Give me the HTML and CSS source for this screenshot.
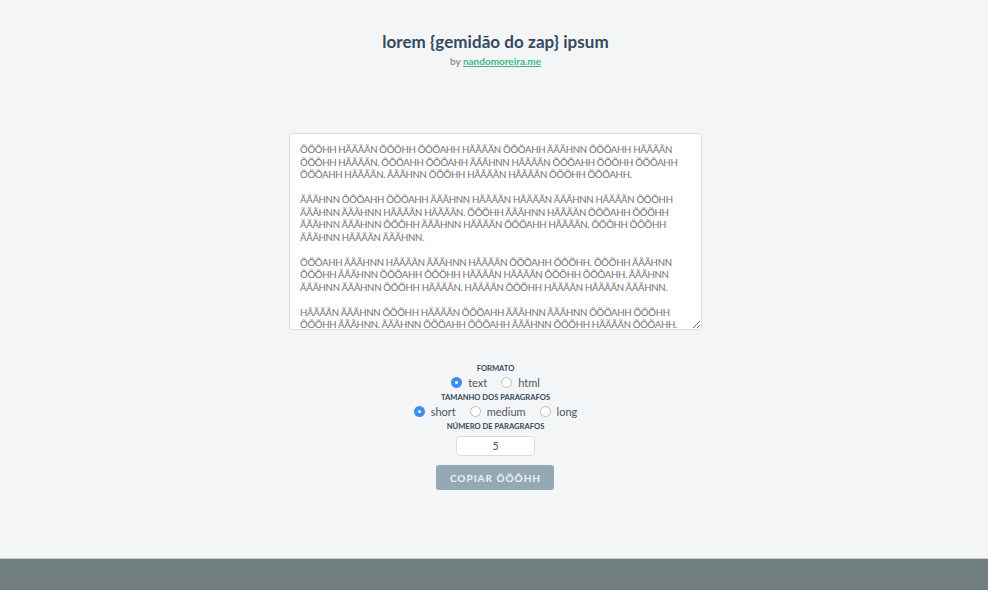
FILE: index.html
```html
<!DOCTYPE html>
<html lang="pt-BR">
<head>
<meta charset="utf-8">
<title>lorem {gemidão do zap} ipsum</title>
<link rel="stylesheet" href="styles.css">
</head>
<body>
<div class="page">
  <header class="header">
    <h1 class="title">lorem {gemidão do zap} ipsum</h1>
    <p class="byline">by <a class="byline-link" href="#">nandomoreira.me</a></p>
  </header>
  <main class="main">
    <textarea class="output" readonly>ÕÕÕHH HÃÃÃÃN ÕÕÕHH ÕÕÕAHH HÃÃÃÃN ÕÕÕAHH ÃÃÃHNN ÕÕÕAHH HÃÃÃÃN
ÕÕÕHH HÃÃÃÃN. ÕÕÕAHH ÕÕÕAHH ÃÃÃHNN HÃÃÃÃN ÕÕÕAHH ÕÕÕHH ÕÕÕAHH
ÕÕÕAHH HÃÃÃÃN. ÃÃÃHNN ÕÕÕHH HÃÃÃÃN HÃÃÃÃN ÕÕÕHH ÕÕÕAHH.

ÃÃÃHNN ÕÕÕAHH ÕÕÕAHH ÃÃÃHNN HÃÃÃÃN HÃÃÃÃN ÃÃÃHNN HÃÃÃÃN ÕÕÕHH
ÃÃÃHNN ÃÃÃHNN HÃÃÃÃN HÃÃÃÃN. ÕÕÕHH ÃÃÃHNN HÃÃÃÃN ÕÕÕAHH ÕÕÕHH
ÃÃÃHNN ÃÃÃHNN ÕÕÕHH ÃÃÃHNN HÃÃÃÃN ÕÕÕAHH HÃÃÃÃN. ÕÕÕHH ÕÕÕHH
ÃÃÃHNN HÃÃÃÃN ÃÃÃHNN.

ÕÕÕAHH ÃÃÃHNN HÃÃÃÃN ÃÃÃHNN HÃÃÃÃN ÕÕÕAHH ÕÕÕHH. ÕÕÕHH ÃÃÃHNN
ÕÕÕHH ÃÃÃHNN ÕÕÕAHH ÕÕÕHH HÃÃÃÃN HÃÃÃÃN ÕÕÕHH ÕÕÕAHH. ÃÃÃHNN
ÃÃÃHNN ÃÃÃHNN ÕÕÕHH HÃÃÃÃN. HÃÃÃÃN ÕÕÕHH HÃÃÃÃN HÃÃÃÃN ÃÃÃHNN.

HÃÃÃÃN ÃÃÃHNN ÕÕÕHH HÃÃÃÃN ÕÕÕAHH ÃÃÃHNN ÃÃÃHNN ÕÕÕAHH ÕÕÕHH
ÕÕÕHH ÃÃÃHNN. ÃÃÃHNN ÕÕÕAHH ÕÕÕAHH ÃÃÃHNN ÕÕÕHH HÃÃÃÃN ÕÕÕAHH.

ÕÕÕHH HÃÃÃÃN ÃÃÃHNN ÕÕÕAHH ÕÕÕHH HÃÃÃÃN ÃÃÃHNN ÕÕÕAHH HÃÃÃÃN
ÃÃÃHNN ÕÕÕHH HÃÃÃÃN ÕÕÕAHH.</textarea>

    <form class="options">
      <span class="opt-label">Formato</span>
      <div class="radio-row">
        <label class="radio"><input type="radio" name="format" checked><span>text</span></label>
        <label class="radio"><input type="radio" name="format"><span>html</span></label>
      </div>
      <span class="opt-label">Tamanho dos paragrafos</span>
      <div class="radio-row">
        <label class="radio"><input type="radio" name="size" checked><span>short</span></label>
        <label class="radio"><input type="radio" name="size"><span>medium</span></label>
        <label class="radio"><input type="radio" name="size"><span>long</span></label>
      </div>
      <span class="opt-label">Número de paragrafos</span>
      <input class="count" type="text" value="5">
      <button class="copy" type="button">Copiar ÕÕÕHH</button>
    </form>
  </main>
  <footer class="footer"></footer>
</div>
</body>
</html>
```

FILE: styles.css
```css
* { box-sizing: border-box; }

html, body {
  margin: 0;
  padding: 0;
  background: #f4f5f7;
  font-family: Lato, "Open Sans", "Liberation Sans", sans-serif;
}

.page {
  min-height: 590px;
  display: flex;
  flex-direction: column;
}

.header {
  padding-top: 30px;
  padding-left: 3px;
  text-align: center;
}

.title {
  margin: 0;
  font-size: 17px;
  line-height: 24px;
  font-weight: 700;
  color: #35495e;
  letter-spacing: 0.05px;
}

.byline {
  margin: 0;
  font-size: 10px;
  line-height: 14px;
  color: #8c969c;
  font-weight: 700;
}

.byline-link {
  color: #42b983;
  text-decoration: underline;
}

.main {
  flex: 1;
  display: flex;
  flex-direction: column;
  align-items: center;
  padding-top: 65px;
  padding-left: 3px;
}

.output {
  display: block;
  width: 413px;
  height: 197px;
  padding: 10px 9px 10px 10px;
  border: 1px solid #d9dde2;
  border-radius: 4px;
  background: #fff;
  color: #727272;
  font-family: Lato, "Open Sans", "Liberation Sans", sans-serif;
  font-size: 9.6px;
  line-height: 12.5px;
  letter-spacing: -0.3px;
  white-space: pre;
  overflow: hidden;
  resize: vertical;
}

.options {
  margin: 32px 0 0;
  display: flex;
  flex-direction: column;
  align-items: center;
}

.opt-label {
  font-size: 7.6px;
  line-height: 12px;
  font-weight: 700;
  text-transform: uppercase;
  color: #35495e;
}

.radio-row {
  display: flex;
  gap: 14px;
  height: 17px;
  align-items: center;
}

.radio {
  display: flex;
  align-items: center;
  gap: 6px;
  font-size: 11px;
  color: #4b5563;
  cursor: pointer;
}

.radio input {
  appearance: none;
  -webkit-appearance: none;
  margin: 0;
  width: 11px;
  height: 11px;
  border-radius: 50%;
  border: 1px solid #b8bec5;
  background: #fff;
}

.radio input:checked {
  border: 4px solid #3d8ff2;
  background: #fff;
}

.count {
  margin-top: 4px;
  width: 79px;
  height: 20px;
  border: 1px solid #d9dde2;
  border-radius: 4px;
  background: #fff;
  text-align: center;
  font-family: Lato, "Open Sans", "Liberation Sans", sans-serif;
  font-size: 10.5px;
  color: #555;
  padding: 0;
}

.copy {
  margin-top: 9px;
  width: 118px;
  height: 25px;
  border: 0;
  border-radius: 3px;
  background: #95a9b4;
  color: #eef2f4;
  font-family: Lato, "Open Sans", "Liberation Sans", sans-serif;
  font-size: 10px;
  font-weight: 700;
  letter-spacing: 1px;
  text-transform: uppercase;
  padding: 0;
}

.footer {
  height: 32px;
  background: #707e7e;
  border-top: 1px solid #c9cfd1;
}
```
